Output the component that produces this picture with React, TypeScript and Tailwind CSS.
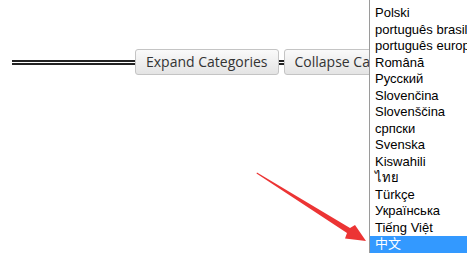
import React from 'react';

const languages = [
  'Polski',
  'português brasileiro',
  'português europeu',
  'Română',
  'Русский',
  'Slovenčina',
  'Slovenščina',
  'српски',
  'Svenska',
  'Kiswahili',
  'ไทย',
  'Türkçe',
  'Українська',
  'Tiếng Việt',
  '中文',
];

function DoubleRule({ width }: { width: string }) {
  return (
    <div className={`${width} flex flex-col gap-[1px]`}>
      <div className="h-[2px] bg-[#222]" />
      <div className="h-[2px] bg-[#222]" />
    </div>
  );
}

function Btn({ label }: { label: string }) {
  return (
    <button className="h-[26px] px-[10px] rounded-[3px] border border-[#c4c4c4] bg-gradient-to-b from-[#fafafa] to-[#e4e4e4] text-[14px] text-[#333] whitespace-nowrap font-['Open_Sans',sans-serif] leading-none">
      {label}
    </button>
  );
}

export default function App() {
  return (
    <div className="relative w-[467px] h-[262px] overflow-hidden bg-white">
      {/* toolbar */}
      <div className="flex items-center pt-[49px] pl-[12px]">
        <DoubleRule width="w-[123px]" />
        <Btn label="Expand Categories" />
        <DoubleRule width="w-[5px]" />
        <Btn label="Collapse Categories" />
      </div>

      {/* language list */}
      <div className="absolute left-[369px] top-[-2px] w-[120px] h-[255px] bg-white border border-[#9a9a9a] pt-[6px] font-['Liberation_Sans','Noto_Sans_CJK_SC',sans-serif] text-[13px] text-black">
        {languages.map((lang, i) => (
          <div
            key={lang}
            className={`h-[16.5px] leading-[16.5px] pl-[5px] whitespace-nowrap ${i === languages.length - 1 ? 'bg-[#3399ff] text-white' : ''}`}
          >
            {lang}
          </div>
        ))}
      </div>

      {/* red arrow */}
      <svg className="absolute left-0 top-0" width="467" height="262" viewBox="0 0 467 262">
        <polygon
          points="257,172.5 350,228 355,225 366,241 345,238.5 347,233 256.5,173.5"
          fill="#ec3434"
        />
      </svg>
    </div>
  );
}
